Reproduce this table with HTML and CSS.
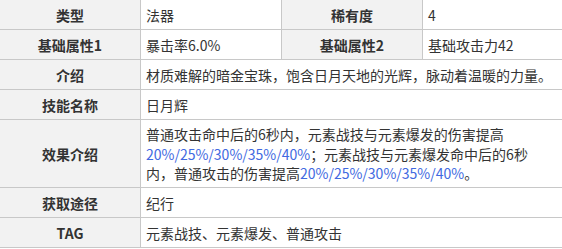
FILE: index.html
```html
<!DOCTYPE html>
<html lang="zh-CN">
<head>
<meta charset="utf-8">
<title>日月辉</title>
<link rel="stylesheet" href="styles.css">
</head>
<body>
<div class="info-table">
  <div class="cell head">类型</div>
  <div class="cell val">法器</div>
  <div class="cell head">稀有度</div>
  <div class="cell val">4</div>

  <div class="cell head">基础属性1</div>
  <div class="cell val">暴击率6.0%</div>
  <div class="cell head">基础属性2</div>
  <div class="cell val">基础攻击力42</div>

  <div class="cell head">介绍</div>
  <div class="cell val wide">材质难解的暗金宝珠，饱含日月天地的光辉，脉动着温暖的力量。</div>

  <div class="cell head">技能名称</div>
  <div class="cell val wide">日月辉</div>

  <div class="cell head">效果介绍</div>
  <div class="cell val wide multi">普通攻击命中后的6秒内，元素战技与元素爆发的伤害提高<br><span class="num">20%/25%/30%/35%/40%</span>；元素战技与元素爆发命中后的6秒<br>内，普通攻击的伤害提高<span class="num">20%/25%/30%/35%/40%</span>。</div>

  <div class="cell head">获取途径</div>
  <div class="cell val wide">纪行</div>

  <div class="cell head">TAG</div>
  <div class="cell val wide">元素战技、元素爆发、普通攻击</div>
</div>
</body>
</html>
```

FILE: styles.css
```css
html, body {
  margin: 0;
  padding: 0;
  background: #ffffff;
}

.info-table {
  display: grid;
  grid-template-columns: 140px 140px 140px 1fr;
  grid-template-rows: 29px 29px 29px 29px 67px 29px 29px;
  gap: 1px;
  background: #c8c8c8;
  border-bottom: 1px solid #c8c8c8;
  width: 562px;
  font-family: "Noto Sans CJK SC", "Noto Sans", sans-serif;
  font-size: 14px;
  color: #333333;
}

.cell {
  display: flex;
  align-items: center;
  padding: 0 5px;
  white-space: nowrap;
  overflow: hidden;
}

.head {
  background: #f2f2f2;
  justify-content: center;
  font-weight: bold;
  color: #333333;
}

.val {
  background: #ffffff;
}

.wide {
  grid-column: span 3;
}

.multi {
  line-height: 19.5px;
  display: block;
  padding-top: 5px;
}

.num {
  color: #4169e1;
}
```
